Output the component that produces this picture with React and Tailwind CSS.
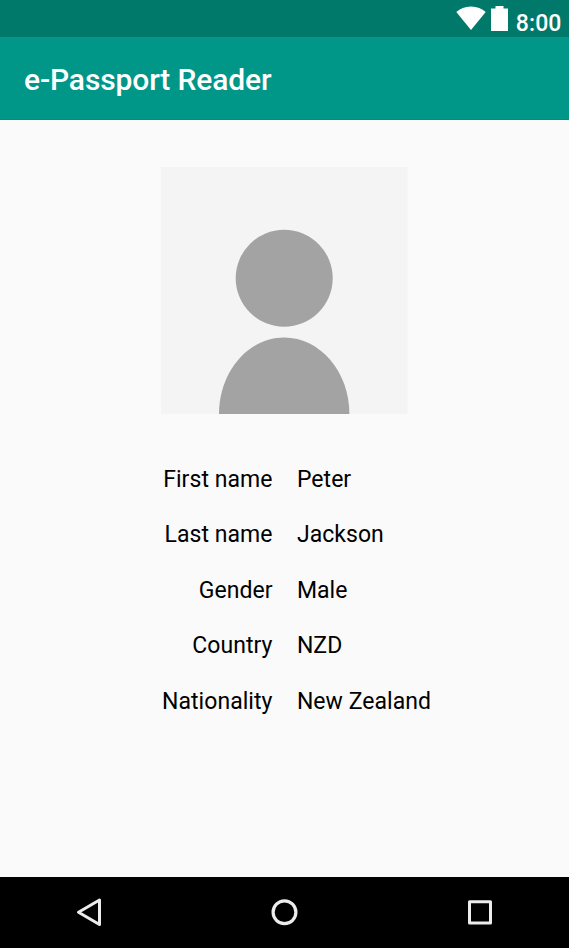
const fields = [
  ["First name", "Peter"],
  ["Last name", "Jackson"],
  ["Gender", "Male"],
  ["Country", "NZD"],
  ["Nationality", "New Zealand"],
];

function StatusBar() {
  return (
    <header className="flex h-[37px] shrink-0 items-start justify-end bg-[#00796b] pr-[7.5px] text-white">
      <svg className="mt-[6px] h-[25px] w-[30px]" viewBox="0 0 30 25" fill="currentColor">
        <path d="M15 24 0.300 6C4 2.700 9 .4 15 .4s11 2.300 14.700 5.600z" />
      </svg>
      <svg className="mt-[6px] ml-[5px] h-[25px] w-[17px]" viewBox="0 0 17 25" fill="currentColor">
        <path d="M4.500 0h8v2.500H17V25H0V2.500h4.500z" />
      </svg>
      <span className="mt-[8px] ml-[7.5px] text-[23px] leading-[32px] font-medium tracking-[0.1px]">8:00</span>
    </header>
  );
}

function NavigationBar() {
  return (
    <nav className="flex h-[71px] shrink-0 items-center justify-between bg-black px-[74px] pb-px text-[#ececec]">
      <svg width="30" height="32" viewBox="0 0 30 32" fill="none" stroke="currentColor" strokeWidth="3" strokeLinejoin="round">
        <path d="M25.500 4v24.500L4.500 16.250z" />
      </svg>
      <svg width="28" height="28" viewBox="0 0 28 28" fill="none" stroke="currentColor" strokeWidth="3.200">
        <circle cx="13.500" cy="14.200" r="11.400" />
      </svg>
      <svg width="30" height="28" viewBox="0 0 30 28" fill="none" stroke="currentColor" strokeWidth="3" strokeLinejoin="round">
        <path d="M4.500 3.700h21v21.300h-21z" />
      </svg>
    </nav>
  );
}

export default function App() {
  return (
    <div className="flex h-[948px] w-[569px] flex-col overflow-hidden bg-[#fafafa] font-[Roboto,sans-serif] text-black">
      <StatusBar />
      <div className="flex h-[83px] shrink-0 items-center border-b border-[#078a7e] bg-[#009688] pt-[4px] pl-[24px]">
        <h1 className="text-[30px] leading-10 font-medium tracking-[-0.13px] text-white">e-Passport Reader</h1>
      </div>
      <main className="flex grow flex-col items-center pt-[47px]">
        <svg className="shrink-0" width="247" height="247" viewBox="0 0 247 247">
          <path fill="#f4f4f4" d="M0 0h246.500v247H0z" />
          <circle cx="123.200" cy="111.200" r="48.500" fill="#a3a3a3" />
          <path fill="#a3a3a3" d="M58 247c0-42 29-76.500 65.200-76.500S188.400 205 188.400 247z" />
        </svg>
        <dl className="mt-[38px] w-full text-[23px] tracking-[0.05px]">
          {fields.map(([label, value]) => (
            <div key={label} className="flex h-[55.550px] items-center">
              <dt className="w-[272.500px] text-right">{label}</dt>
              <dd className="pl-[24.400px]">{value}</dd>
            </div>
          ))}
        </dl>
      </main>
      <NavigationBar />
    </div>
  );
}
